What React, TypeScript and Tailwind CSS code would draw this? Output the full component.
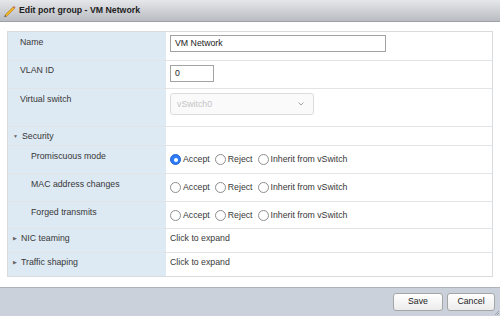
// Edit port group dialog (ESXi host client style)

function Radio({ on = false }: { on?: boolean }) {
  return on ? (
    <span className="w-[11px] h-[11px] rounded-full bg-[#2f7cf6] border border-[#1f64d6] flex items-center justify-center shrink-0">
      <span className="w-[4px] h-[4px] rounded-full bg-white" />
    </span>
  ) : (
    <span className="w-[11px] h-[11px] rounded-full bg-white border border-[#8e8e8e] shrink-0" />
  )
}

function RadioGroup({ value }: { value?: string }) {
  const opts = ["Accept", "Reject", "Inherit from vSwitch"]
  return (
    <div className="flex items-center gap-[5px]">
      {opts.map((o) => (
        <label key={o} className="flex items-center gap-[2px]">
          <Radio on={o === value} />
          <span>{o}</span>
        </label>
      ))}
    </div>
  )
}

function Row({
  label,
  h,
  indent = "pl-[12px]",
  labelPt = "pt-[5px]",
  rightPt = "pt-[4px]",
  caret,
  children,
  last = false,
}: {
  label: string
  h: string
  indent?: string
  labelPt?: string
  rightPt?: string
  caret?: "down" | "right"
  children?: React.ReactNode
  last?: boolean
}) {
  return (
    <div className={`flex ${h} ${last ? "" : "border-b border-[#e2e4e6]"}`}>
      <div className={`w-[158px] shrink-0 bg-[#dde9f3] ${labelPt} ${indent} flex items-start gap-[4px] leading-[11px]`}>
        {caret === "down" && <span className="text-[5px] leading-[11px] text-[#666]">▼</span>}
        {caret === "right" && <span className="text-[5px] leading-[11px] text-[#666]">▶</span>}
        <span>{label}</span>
      </div>
      <div className={`flex-1 pl-[4px] ${rightPt} leading-[11px]`}>{children}</div>
    </div>
  )
}

export default function App() {
  return (
    <div className="w-[500px] h-[316px] flex flex-col bg-white text-[#383838] text-[8.75px] font-['Liberation_Sans',Arial,sans-serif] overflow-hidden">
      {/* title bar */}
      <div className="h-[22px] shrink-0 flex items-center gap-[3px] pl-[3px] bg-gradient-to-b from-[#e6e7ea] to-[#b9bcc1] border-b border-[#9da1a7]">
        <svg width="13" height="13" viewBox="0 0 13 13">
          <polygon points="2,11 10,3 11.5,4.5 3.5,12.5" fill="#f0b429" stroke="#b07a12" strokeWidth="0.6" />
          <polygon points="10,3 11,2 12.5,3.5 11.5,4.5" fill="#c96a5a" />
          <polygon points="2,11 3.5,12.5 1,13" fill="#555" />
        </svg>
        <span className="font-bold text-[#222] text-[8.75px]">Edit port group - VM Network</span>
      </div>

      {/* body */}
      <div className="flex-1 pt-[9px] pl-[7px] pr-[7px]">
        <div className="border border-[#d9dcdf]">
          <Row label="Name" h="h-[29px]" rightPt="pt-[3px]">
            <div className="w-[216px] h-[17px] border border-[#a3a3a3] flex items-center pl-[4px] text-[#222]">VM Network</div>
          </Row>
          <Row label="VLAN ID" h="h-[28px]" labelPt="pt-[4px]" rightPt="pt-[4px]">
            <div className="w-[44px] h-[17px] border border-[#a3a3a3] flex items-center pl-[4px] text-[#222]">0</div>
          </Row>
          <Row label="Virtual switch" h="h-[38px]" rightPt="pt-[4px]">
            <div className="w-[144px] h-[22px] border border-[#dcdcdc] rounded-[3px] bg-[#fafafa] flex items-center justify-between pl-[6px] pr-[9px] text-[#c4c4c4]">
              <span>vSwitch0</span>
              <svg width="6" height="4" viewBox="0 0 6 4">
                <polyline points="0.5,0.5 3,3 5.5,0.5" fill="none" stroke="#9a9a9a" strokeWidth="0.9" />
              </svg>
            </div>
          </Row>
          <Row label="Security" h="h-[19px]" indent="pl-[5px]" labelPt="pt-[4px]" caret="down" />
          <Row label="Promiscuous mode" h="h-[28px]" indent="pl-[23px]" rightPt="pt-[8px]">
            <RadioGroup value="Accept" />
          </Row>
          <Row label="MAC address changes" h="h-[28px]" indent="pl-[23px]" rightPt="pt-[8px]">
            <RadioGroup />
          </Row>
          <Row label="Forged transmits" h="h-[27px]" indent="pl-[23px]" rightPt="pt-[8px]">
            <RadioGroup />
          </Row>
          <Row label="NIC teaming" h="h-[24px]" indent="pl-[5px]" labelPt="pt-[4px]" caret="right">
            Click to expand
          </Row>
          <Row label="Traffic shaping" h="h-[23px]" indent="pl-[5px]" labelPt="pt-[4px]" caret="right" last>
            Click to expand
          </Row>
        </div>
      </div>

      {/* footer */}
      <div className="h-[29px] shrink-0 bg-[#cbd1da] border-t border-[#aeb3ba] flex items-start justify-end gap-[4px] pt-[5px] pr-[5px] relative">
        <button className="w-[50px] h-[18px] rounded-[3px] border border-[#a6a6a6] bg-gradient-to-b from-white to-[#ececec] text-[#222]">Save</button>
        <button className="w-[48px] h-[18px] rounded-[3px] border border-[#a6a6a6] bg-gradient-to-b from-white to-[#ececec] text-[#222]">Cancel</button>
        <svg className="absolute right-[1px] bottom-[1px]" width="4" height="4" viewBox="0 0 4 4">
          <line x1="0" y1="4" x2="4" y2="0" stroke="#8a8f96" strokeWidth="0.7" />
          <line x1="2" y1="4" x2="4" y2="2" stroke="#8a8f96" strokeWidth="0.7" />
        </svg>
      </div>
    </div>
  )
}
